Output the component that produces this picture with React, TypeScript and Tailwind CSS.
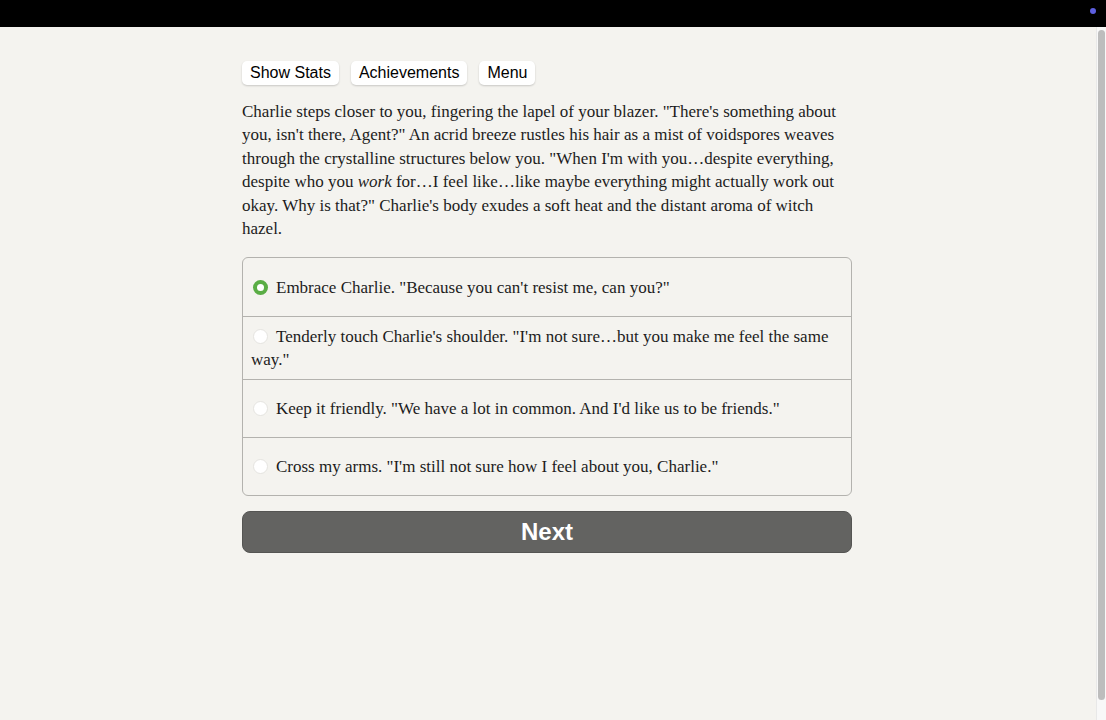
import { useState } from "react";

const serif = "font-['Liberation_Serif','Times_New_Roman',serif]";
const sans = "font-['Liberation_Sans',Arial,sans-serif]";

const choices = [
  <>Embrace Charlie. "Because you can't resist me, can you?"</>,
  <>
    Tenderly touch Charlie's shoulder. "I'm not sure…but you make me feel the same
    <br />
    way."
  </>,
  <>Keep it friendly. "We have a lot in common. And I'd like us to be friends."</>,
  <>Cross my arms. "I'm still not sure how I feel about you, Charlie."</>,
];

function Radio({ on }: { on: boolean }) {
  return on ? (
    <span className="inline-block h-[15px] w-[15px] shrink-0 rounded-full bg-[#5aad45] align-[-2px] p-[4px]">
      <span className="block h-full w-full rounded-full bg-white" />
    </span>
  ) : (
    <span className="inline-block h-[15px] w-[15px] shrink-0 rounded-full border border-[#e4e3df] bg-white align-[-2px]" />
  );
}

export default function App() {
  const [picked, setPicked] = useState(0);

  return (
    <div className="flex h-[720px] flex-col overflow-hidden bg-[#f4f3ef]">
      <div className="relative h-[27px] shrink-0 bg-black">
        <span className="absolute right-[10px] top-[8px] h-[6px] w-[6px] rounded-full bg-[#5d5fe0]" />
      </div>
      <div className="flex min-h-0 flex-1">
        <main className="flex-1 pt-[34px]">
          <div className="mx-auto w-[610px] translate-x-[-1px]">
            <div className={`flex gap-[12px] ${sans} text-[16px] text-black`}>
              {["Show Stats", "Achievements", "Menu"].map((b) => (
                <button
                  key={b}
                  className="h-[24px] rounded-[5px] bg-white px-[8px] leading-[24px] shadow-[0_1px_2px_rgba(0,0,0,0.18)]"
                >
                  {b}
                </button>
              ))}
            </div>

            <p
              className={`mt-[15px] whitespace-nowrap ${serif} text-[17px] leading-[23.4px] text-[#1c1c1c]`}
            >
              Charlie steps closer to you, fingering the lapel of your blazer. "There's something about
              <br />
              you, isn't there, Agent?" An acrid breeze rustles his hair as a mist of voidspores weaves
              <br />
              through the crystalline structures below you. "When I'm with you…despite everything,
              <br />
              despite who you <em>work</em> for…I feel like…like maybe everything might actually work out
              <br />
              okay. Why is that?" Charlie's body exudes a soft heat and the distant aroma of witch
              <br />
              hazel.
            </p>

            <div className="mt-[17px] overflow-hidden rounded-[6px] border border-[#b3b2ae]">
              {choices.map((c, i) => (
                <label
                  key={i}
                  onClick={() => setPicked(i)}
                  className={`flex min-h-[58px] cursor-pointer items-center px-[8px] py-[8px] ${serif} text-[17px] leading-[23px] text-[#1c1c1c] ${
                    i > 0 ? "border-t border-[#b3b2ae]" : ""
                  }`}
                >
                  <span className="block whitespace-nowrap">
                    <span className="mr-[8px] ml-[2px]">
                      <Radio on={picked === i} />
                    </span>
                    {c}
                  </span>
                </label>
              ))}
            </div>

            <button
              className={`mt-[15px] flex h-[42px] w-full items-center justify-center rounded-[8px] border border-[#555553] bg-[#636361] ${sans} text-[24px] font-bold text-white`}
            >
              Next
            </button>
          </div>
        </main>
        <div className="flex w-[10px] shrink-0 flex-col border-l border-[#e8e8e8] bg-[#f8f8f8] px-[1px] pt-[3px] pb-[20px]">
          <div className="flex-1 rounded-full bg-[#bdbdbd]" />
        </div>
      </div>
    </div>
  );
}
